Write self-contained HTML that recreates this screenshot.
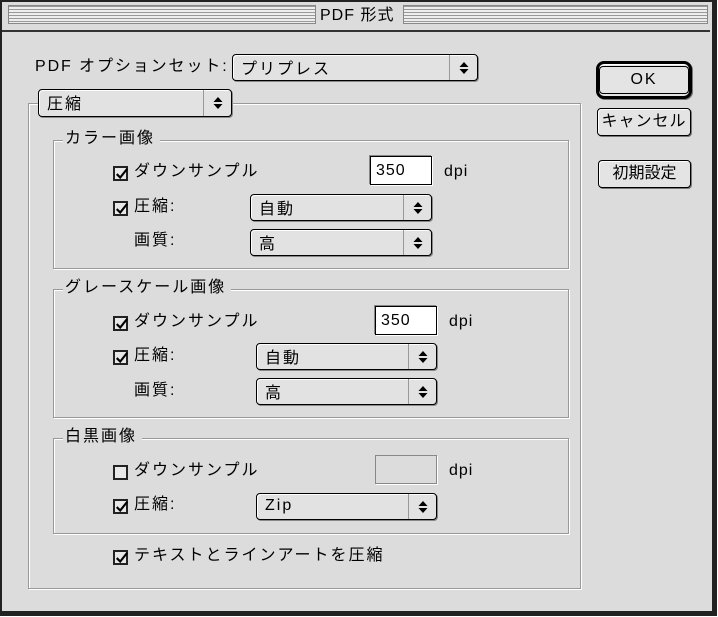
<!DOCTYPE html>
<html><head><meta charset="utf-8">
<style>
*{box-sizing:border-box;margin:0;padding:0}
body{width:718px;height:617px;background:#fff;position:relative;overflow:hidden;font-family:"Liberation Sans","Noto Sans CJK JP",sans-serif;font-size:16px;color:#000;letter-spacing:2px}
.abs{position:absolute}
.win{left:0;top:0;width:717px;height:616px;background:#dcdcdc;border:2px solid #222;border-right:5px solid #222;border-bottom:5px solid #222}
.title{left:2px;top:2px;width:708px;height:30px;background:#dcdcdc;border-bottom:2px solid #333}
.stripes{top:5px;height:19px;background:repeating-linear-gradient(#999 0 1px,#eee 1px 3px);border:1px solid #888}
.t{white-space:nowrap;line-height:1}
.popup{border:1px solid #000;border-radius:4px;background:#e2e2e2;box-shadow:1px 1px 0 #888,inset 1px 1px 0 #fff}
.popup .ar{position:absolute;right:0;top:0;bottom:0;width:28px;border-left:1px solid #999;}
.popup .ar svg{position:absolute;left:9px;top:50%;margin-top:-6px}
.popup span{position:absolute;left:8px;top:50%;transform:translateY(-55%);white-space:nowrap}
.group{border:1px solid #999;box-shadow:1px 1px 0 #fff,inset 1px 1px 0 #fff}
.lbl{background:#dcdcdc;padding:0 5px 0 2px}
.cb{width:15px;height:15px;border:2px solid #222;background:#e8e8e8}
.field{background:#fff;border:1px solid #000;box-shadow:-1px -1px 0 #888,1px 1px 0 #fff}
.btn{border:1px solid #000;border-radius:4px;background:#e4e4e4;box-shadow:1px 1px 0 #777,inset 1px 1px 0 #fff;text-align:center}
.l{letter-spacing:1px}
</style></head><body>
<div class="abs win"></div>
<div class="abs title"></div>
<div class="abs stripes" style="left:8px;width:308px"></div>
<div class="abs stripes" style="left:403px;width:305px"></div>
<div class="abs t" style="left:320px;top:8px;font-size:16px;letter-spacing:1px">PDF 形式</div>

<svg width="0" height="0" style="position:absolute"><defs>
<symbol id="ar" viewBox="0 0 10 12"><path d="M5 0L9.5 5H0.5Z M5 12L9.5 7H0.5Z" fill="#000"/></symbol>
<symbol id="ck" viewBox="0 0 15 15"><path d="M2 7L6 11L14 1" stroke="#000" stroke-width="2.5" fill="none"/></symbol>
</defs></svg>

<div class="abs t" style="left:35px;top:59px;letter-spacing:1.9px">PDF オプションセット:</div>
<div class="abs popup" style="left:232px;top:54px;width:246px;height:27px"><span>プリプレス</span><div class="ar"><svg width="10" height="12"><use href="#ar"/></svg></div></div>

<div class="abs btn" style="left:596px;top:61px;width:96px;height:38px;border:3px solid #000;border-radius:8px;padding-top:2px"><div style="border:1px solid #000;border-radius:4px;height:28px;line-height:26px">OK</div></div>
<div class="abs btn" style="left:597px;top:108px;width:94px;height:28px;line-height:26px;letter-spacing:1px">キャンセル</div>
<div class="abs btn" style="left:598px;top:160px;width:93px;height:28px;line-height:26px;letter-spacing:0">初期設定</div>

<div class="abs group" style="left:28px;top:103px;width:553px;height:486px"></div>
<div class="abs popup" style="left:38px;top:89px;width:194px;height:28px"><span>圧縮</span><div class="ar"><svg width="10" height="12"><use href="#ar"/></svg></div></div>

<!-- color -->
<div class="abs group" style="left:53px;top:140px;width:516px;height:129px"></div>
<div class="abs t lbl" style="left:63px;top:131px">カラー画像</div>
<div class="abs cb" style="left:113px;top:166px"><svg width="13" height="13" viewBox="0 0 15 15"><use href="#ck"/></svg></div>
<div class="abs t" style="left:134px;top:164px">ダウンサンプル</div>
<div class="abs field" style="left:370px;top:156px;width:62px;height:29px"><span class="abs t l" style="left:5px;top:6px">350</span></div>
<div class="abs t l" style="left:444px;top:164px">dpi</div>
<div class="abs cb" style="left:113px;top:201px"><svg width="13" height="13" viewBox="0 0 15 15"><use href="#ck"/></svg></div>
<div class="abs t" style="left:134px;top:199px">圧縮:</div>
<div class="abs popup" style="left:250px;top:194px;width:182px;height:27px"><span>自動</span><div class="ar"><svg width="10" height="12"><use href="#ar"/></svg></div></div>
<div class="abs t" style="left:134px;top:233px">画質:</div>
<div class="abs popup" style="left:250px;top:229px;width:182px;height:27px"><span>高</span><div class="ar"><svg width="10" height="12"><use href="#ar"/></svg></div></div>

<!-- gray -->
<div class="abs group" style="left:53px;top:289px;width:516px;height:129px"></div>
<div class="abs t lbl" style="left:63px;top:280px">グレースケール画像</div>
<div class="abs cb" style="left:113px;top:316px"><svg width="13" height="13" viewBox="0 0 15 15"><use href="#ck"/></svg></div>
<div class="abs t" style="left:134px;top:314px">ダウンサンプル</div>
<div class="abs field" style="left:375px;top:306px;width:62px;height:29px"><span class="abs t l" style="left:5px;top:6px">350</span></div>
<div class="abs t l" style="left:449px;top:314px">dpi</div>
<div class="abs cb" style="left:113px;top:350px"><svg width="13" height="13" viewBox="0 0 15 15"><use href="#ck"/></svg></div>
<div class="abs t" style="left:134px;top:348px">圧縮:</div>
<div class="abs popup" style="left:256px;top:343px;width:181px;height:27px"><span>自動</span><div class="ar"><svg width="10" height="12"><use href="#ar"/></svg></div></div>
<div class="abs t" style="left:134px;top:383px">画質:</div>
<div class="abs popup" style="left:256px;top:378px;width:181px;height:27px"><span>高</span><div class="ar"><svg width="10" height="12"><use href="#ar"/></svg></div></div>

<!-- bw -->
<div class="abs group" style="left:53px;top:438px;width:516px;height:96px"></div>
<div class="abs t lbl" style="left:63px;top:429px">白黒画像</div>
<div class="abs cb" style="left:113px;top:465px"></div>
<div class="abs t" style="left:134px;top:463px">ダウンサンプル</div>
<div class="abs" style="left:375px;top:455px;width:62px;height:29px;border:1px solid #888;box-shadow:1px 1px 0 #fff"></div>
<div class="abs t l" style="left:449px;top:463px">dpi</div>
<div class="abs cb" style="left:113px;top:499px"><svg width="13" height="13" viewBox="0 0 15 15"><use href="#ck"/></svg></div>
<div class="abs t" style="left:134px;top:497px">圧縮:</div>
<div class="abs popup" style="left:256px;top:493px;width:181px;height:27px"><span>Zip</span><div class="ar"><svg width="10" height="12"><use href="#ar"/></svg></div></div>

<div class="abs cb" style="left:113px;top:550px"><svg width="13" height="13" viewBox="0 0 15 15"><use href="#ck"/></svg></div>
<div class="abs t" style="left:134px;top:548px">テキストとラインアートを圧縮</div>
</body></html>
